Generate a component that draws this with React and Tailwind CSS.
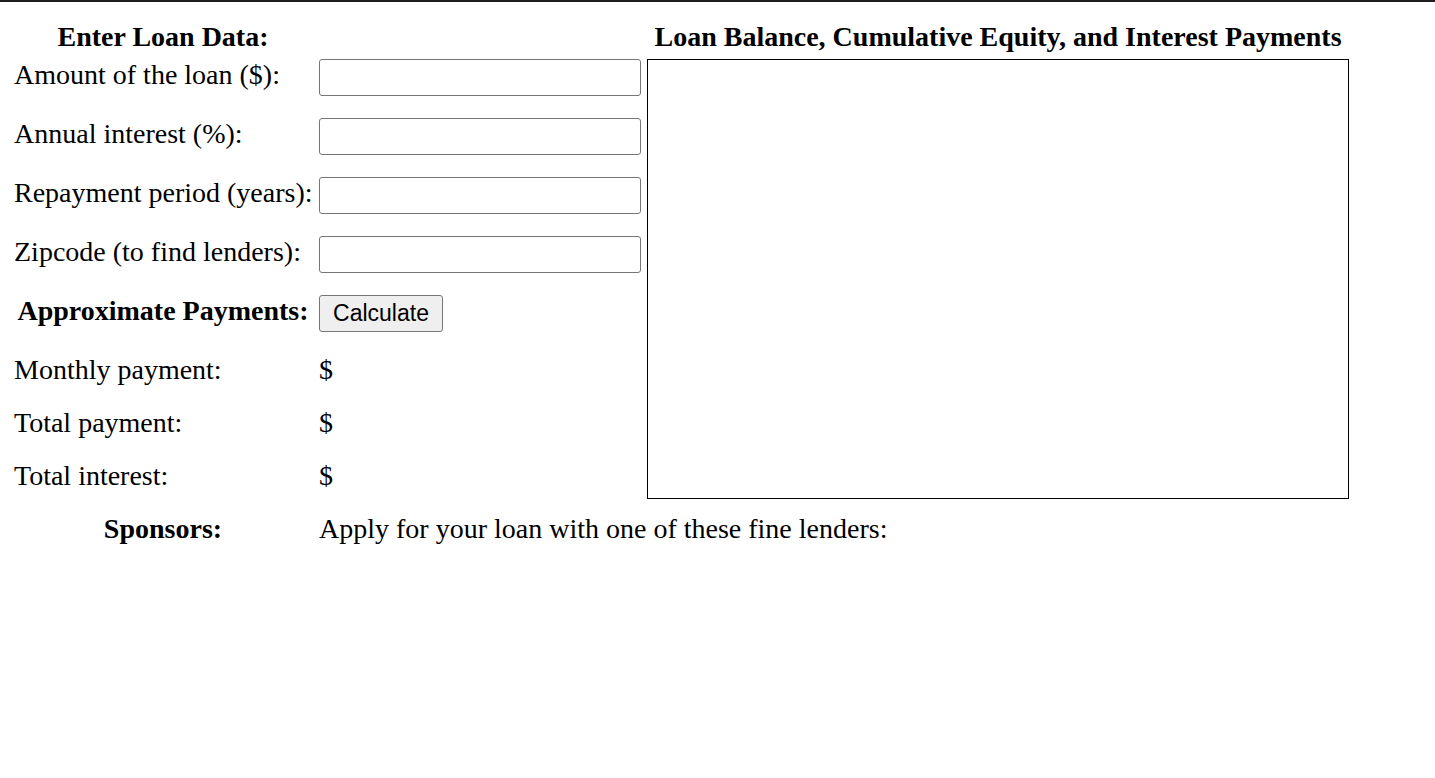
const labelCls = "col-start-1 whitespace-nowrap mb-[6px]";
const inputCls =
  "col-start-2 block w-[322px] h-[37px] border border-[#767676] rounded-[3px] bg-white";

export default function App() {
  return (
    <div className="min-h-[778px] w-[1435px] bg-white border-t-2 border-[#1e1e1e] text-black text-[28px] leading-[31px] font-['Liberation_Serif','Times_New_Roman',serif]">
      <div className="pl-[14px] pt-[19px]">
        <div className="grid grid-cols-[305px_328px_702px] h-[31px] items-center">
          <div className="pr-[7px] text-center font-bold">Enter Loan Data:</div>
          <div></div>
          <div className="text-center font-bold whitespace-nowrap">
            Loan Balance, Cumulative Equity, and Interest Payments
          </div>
        </div>
        <div className="mt-[7px] grid grid-cols-[305px_328px_702px] grid-rows-[37px_37px_37px_37px_37px_31px_31px_31px_31px] gap-y-[22px] items-center">
          <div className={`${labelCls} row-start-1`}>Amount of the loan ($):</div>
          <input type="text" className={`${inputCls} row-start-1`} />
          <div className={`${labelCls} row-start-2`}>Annual interest (%):</div>
          <input type="text" className={`${inputCls} row-start-2`} />
          <div className={`${labelCls} row-start-3`}>Repayment period (years):</div>
          <input type="text" className={`${inputCls} row-start-3`} />
          <div className={`${labelCls} row-start-4`}>Zipcode (to find lenders):</div>
          <input type="text" className={`${inputCls} row-start-4`} />

          <div className="col-start-1 row-start-5 mb-[6px] pr-[7px] text-center font-bold whitespace-nowrap">
            Approximate Payments:
          </div>
          <div className="col-start-2 row-start-5">
            <button className="h-[37px] w-[124px] border border-[#767676] rounded-[3px] bg-[#efefef] text-[23px] leading-none font-['Liberation_Sans',Arial,sans-serif]">
              Calculate
            </button>
          </div>

          <div className="col-start-1 row-start-6">Monthly payment:</div>
          <div className="col-start-2 row-start-6">$</div>
          <div className="col-start-1 row-start-7">Total payment:</div>
          <div className="col-start-2 row-start-7">$</div>
          <div className="col-start-1 row-start-8">Total interest:</div>
          <div className="col-start-2 row-start-8">$</div>

          <div className="col-start-3 row-start-1 row-span-8 self-start h-[440px] w-[702px] border border-black"></div>

          <div className="col-start-1 row-start-9 pr-[7px] text-center font-bold">
            Sponsors:
          </div>
          <div className="col-start-2 col-span-2 row-start-9 whitespace-nowrap">
            Apply for your loan with one of these fine lenders:
          </div>
        </div>
      </div>
    </div>
  );
}
